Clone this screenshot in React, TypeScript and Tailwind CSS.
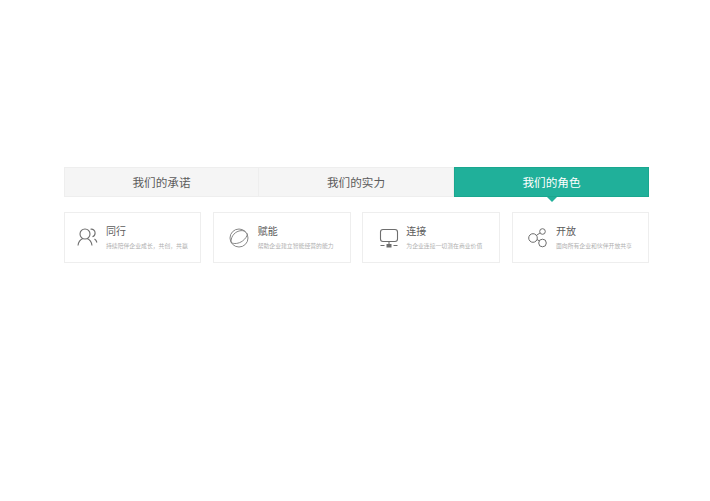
import React from "react";

const UsersIcon = () => (
  <svg width="21" height="19" viewBox="0 0 21 19" fill="none" stroke="#6e6e6e" strokeWidth="1.100">
    <circle cx="8" cy="6" r="5" />
    <path d="M1 17.500c.5-4 2.800-6.200 4.800-7M15 17.500c-.5-4-2.800-6.200-4.800-7" />
    <path d="M13.500 1.300c2.500-.6 4.600 1.200 4.600 3.600 0 1.800-1 3.200-2.600 3.900" />
    <path d="M17.500 11c1.200.8 2 2 2.400 3.500" />
  </svg>
);

const GlobeIcon = () => (
  <svg width="20" height="20" viewBox="0 0 20 20" fill="none" stroke="#7a7a7a" strokeWidth="0.900">
    <circle cx="10" cy="10" r="9" />
    <path d="M2.200 14.500C1.500 10 4.500 4.500 10 3c2.800-.8 5.300-.4 6.600 1" />
    <path d="M2.200 14.500c2.500 1.700 7.500 1.300 11.300-1.500 3-2.200 4.800-5 4.900-7.500" />
  </svg>
);

const MonitorIcon = () => (
  <svg width="20" height="20" viewBox="0 0 20 20" fill="none" stroke="#6e6e6e" strokeWidth="1.100">
    <rect x="1.500" y="1.500" width="17" height="12" rx="2.500" />
    <path d="M10 13.500v2.500" />
    <rect x="7.500" y="16" width="5" height="3.500" fill="#6e6e6e" stroke="none" />
    <path d="M1.500 17.500h4M14.500 17.500h4" />
  </svg>
);

const ShareIcon = () => (
  <svg width="20" height="20" viewBox="0 0 20 20" fill="none" stroke="#6e6e6e" strokeWidth="1">
    <circle cx="5" cy="10" r="4.300" />
    <circle cx="14.500" cy="3.500" r="2.800" />
    <circle cx="14.500" cy="15" r="3.800" />
    <path d="M8.300 7.500l3.800-2.600M9 11.500l2.200 1.300" />
  </svg>
);

const cards = [
  { title: "同行", desc: "持续陪伴企业成长，共创，共赢", icon: <UsersIcon />, iconBox: "ml-[12px] w-[29px]", width: "w-[137px]" },
  { title: "赋能", desc: "帮助企业建立智能经营的能力", icon: <GlobeIcon />, iconBox: "ml-[15px] w-[29px]", width: "w-[138px]" },
  { title: "连接", desc: "为企业连接一切潜在商业价值", icon: <MonitorIcon />, iconBox: "ml-[16px] w-[27px]", width: "w-[138px]" },
  { title: "开放", desc: "面向所有企业和伙伴开放共享", icon: <ShareIcon />, iconBox: "ml-[15px] w-[28px]", width: "w-[137px]" },
];

const App: React.FC = () => {
  return (
    <div
      className="min-h-[501px] bg-white pt-[167px] pl-[64px]"
      style={{ fontFamily: '"Noto Sans CJK SC", "Liberation Sans", sans-serif' }}
    >
      <div className="flex w-[585px] h-[30px] text-[11.600px]">
        <div className="flex w-[195px] items-center justify-center border border-[#eeeeee] bg-[#f5f5f5] pt-px text-[#5c5c5c]">
          我们的承诺
        </div>
        <div className="flex w-[195px] items-center justify-center border-y border-r border-[#eeeeee] bg-[#f5f5f5] pt-px text-[#5c5c5c]">
          我们的实力
        </div>
        <div className="relative flex w-[195px] items-center justify-center border border-[#1aa78f] bg-[#20b09a] pt-px text-white">
          我们的角色
          <div className="absolute left-1/2 top-full -ml-[5px] mt-px border-x-[5px] border-t-[5px] border-x-transparent border-t-[#20b09a]" />
        </div>
      </div>

      <div className="mt-[15px] flex w-[585px] justify-between">
        {cards.map((c) => (
          <div key={c.title} className={`flex h-[51px] items-center border border-[#eeeeee] ${c.width}`}>
            <div className={`flex shrink-0 items-center ${c.iconBox}`}>{c.icon}</div>
            <div className="-mt-px min-w-0">
              <div className="text-[10px] leading-[14px] text-[#5c5c5c]">{c.title}</div>
              <div className="mt-[3px] whitespace-nowrap text-[5.850px] leading-[9px] text-[#b0b0b0]">{c.desc}</div>
            </div>
          </div>
        ))}
      </div>
    </div>
  );
};

export default App;
